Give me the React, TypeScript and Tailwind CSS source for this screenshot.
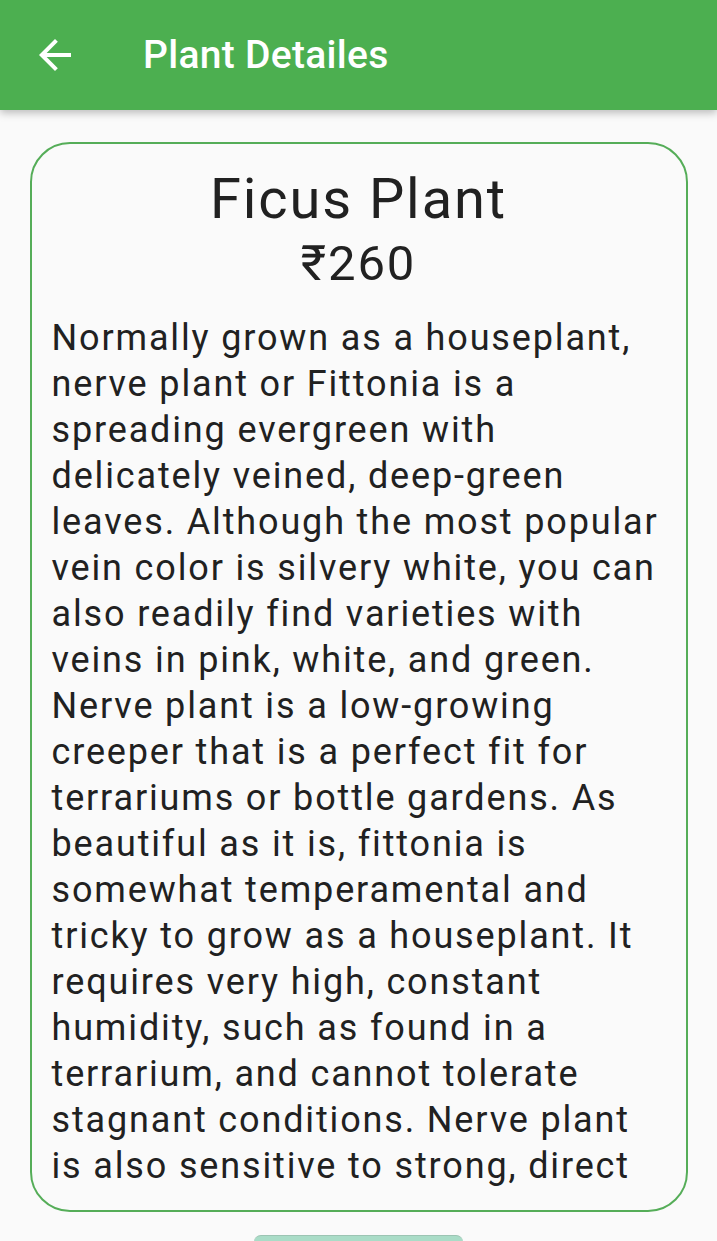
import React from "react";

const body =
  "Normally grown as a houseplant, nerve plant or Fittonia is a spreading evergreen with delicately veined, deep-green leaves. Although the most popular vein color is silvery white, you can also readily find varieties with veins in pink, white, and green. Nerve plant is a low-growing creeper that is a perfect fit for terrariums or bottle gardens. As beautiful as it is, fittonia is somewhat temperamental and tricky to grow as a houseplant. It requires very high, constant humidity, such as found in a terrarium, and cannot tolerate stagnant conditions. Nerve plant is also sensitive to strong, direct";

export default function App() {
  return (
    <div
      className="w-[717px] h-[1241px] overflow-hidden bg-[#fafafa] flex flex-col"
      style={{ fontFamily: "Roboto, 'Noto Sans', sans-serif" }}
    >
      <header className="relative z-10 h-[110px] shrink-0 bg-[#4caf50] flex items-center shadow-[0_3px_8px_rgba(0,0,0,0.25)]">
        <div className="w-[48px] h-[48px] ml-[31px] flex items-center justify-center">
          <svg width="48" height="48" viewBox="0 0 24 24" fill="#ffffff">
            <path d="M20 11H7.83l5.59-5.59L12 4l-8 8 8 8 1.41-1.41L7.83 13H20v-2z" />
          </svg>
        </div>
        <h1 className="ml-[64px] text-white text-[39px] font-medium leading-none tracking-[0.3px]">
          Plant Detailes
        </h1>
      </header>
      <main className="flex flex-col items-center pt-[32px]">
        <section className="w-[658px] h-[1070px] border-2 border-[#55ad58] rounded-[40px] overflow-hidden px-[20px] pt-[22px]">
          <h2 className="text-center text-[56px] leading-[66px] tracking-[1.9px] text-[#212121] font-normal">
            Ficus Plant
          </h2>
          <p className="text-center text-[49px] leading-[57px] tracking-[1.9px] text-[#212121] mt-[3px]">
            ₹260
          </p>
          <p className="mt-[23px] text-[36px] leading-[46px] tracking-[1.85px] text-[#212121]">
            {body}
          </p>
        </section>
        <div className="mt-[23px] w-[209px] h-[40px] rounded-[7px] bg-[#a9dcc7] border-t border-[#9cc4b3]" />
      </main>
    </div>
  );
}
